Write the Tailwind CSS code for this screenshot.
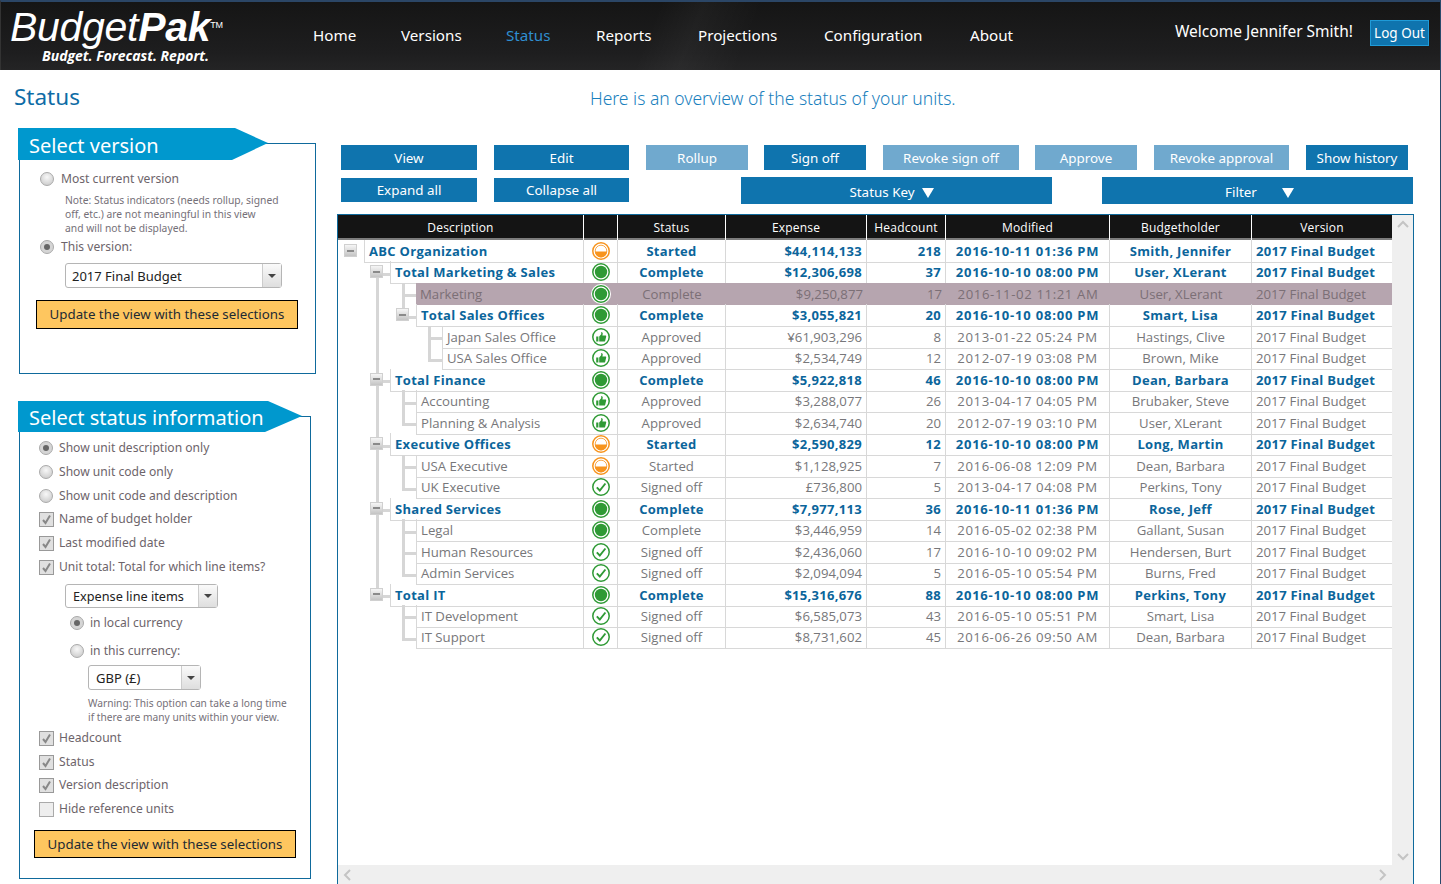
<!DOCTYPE html>
<html lang="en">
<head>
  <meta charset="UTF-8" />
  <title>BudgetPak - Status</title>
  <script src="https://cdn.jsdelivr.net/npm/@tailwindcss/browser@4"></script>
</head>
<body class="h-[884px] overflow-hidden bg-white font-['Noto_Sans',sans-serif] border-r border-[#2b4a6b]">

  <!-- Header -->
  <header class="h-[70px] flex items-center border-t-2 border-l border-t-[#2b4666] border-l-[#333] bg-[linear-gradient(112deg,transparent_45%,rgba(255,255,255,0.035)_48%,transparent_52%),linear-gradient(#151515,#1e1e1f_75%,#242425)] text-white">
    <div class="w-[312px] pl-[9px] shrink-0 -mt-[2px]">
      <div class="font-['Liberation_Sans',sans-serif] italic text-[41px] leading-[36px] tracking-[-0.3px] whitespace-nowrap">Budget<b>Pak</b><span class="text-[9px] not-italic align-[13px]">TM</span></div>
      <div class="pl-[32px] font-['Open_Sans',sans-serif] italic font-bold text-[14px] leading-[16px] mt-[3px] whitespace-nowrap">Budget. Forecast. Report.</div>
    </div>
    <nav class="flex text-[15.2px] -mt-[1px] whitespace-nowrap">
      <a class="w-[88px]">Home</a>
      <a class="w-[105px]">Versions</a>
      <a class="w-[90px] text-[#2f8ed0]">Status</a>
      <a class="w-[102px]">Reports</a>
      <a class="w-[126px]">Projections</a>
      <a class="w-[146px]">Configuration</a>
      <a class="w-[205px]">About</a>
    </nav>
    <div class="w-[195px] text-[15.5px] -mt-[8px] whitespace-nowrap">Welcome Jennifer Smith!</div>
    <button class="w-[59px] h-[26px] -mt-[6px] bg-[#0f74ae] border border-[#1f9bd8] text-[13.5px] whitespace-nowrap">Log Out</button>
  </header>

  <div class="flex h-[58px]">
    <h1 class="w-[590px] pl-[14px] pt-[11px] text-[22.5px] leading-[32px] text-[#0e6ca6]">Status</h1>
    <p class="pt-[16px] text-[17.5px] leading-[24px] font-light text-[#1a80bd] whitespace-nowrap">Here is an overview of the status of your units.</p>
  </div>

  <div class="flex">
    <!-- Left column -->
    <aside class="w-[337px] shrink-0 pl-[18px] text-[12.1px] text-[#6d646a]">

      <div class="relative z-10 w-[250px] h-[32px] -mb-[17px] pl-[11px] bg-[#0098ce] text-white text-[20px] leading-[36px] [clip-path:polygon(0_0,217px_0,250px_15px,214px_32px,0_32px)]">Select version</div>
      <section class="ml-[1px] w-[297px] h-[231px] border border-[#0f6a9c] pt-[25px]">
        <div class="flex items-center h-[20px] pl-[20px] gap-[7px]">
          <span class="w-[14px] h-[14px] rounded-full border border-[#aaa] bg-[radial-gradient(circle_at_50%_35%,#f8f8f8,#c4c4c4)]"></span>
          <span>Most current version</span>
        </div>
        <p class="pl-[45px] mt-[4px] text-[10.3px] leading-[14px] text-[#757078]">Note: Status indicators (needs rollup, signed<br>off, etc.) are not meaningful in this view<br>and will not be displayed.</p>
        <div class="flex items-center h-[20px] pl-[20px] gap-[7px] mt-[2px]">
          <span class="flex items-center justify-center w-[14px] h-[14px] rounded-full border border-[#aaa] bg-[#d5d5d5]"><span class="w-[6px] h-[6px] rounded-full bg-[#666]"></span></span>
          <span>This version:</span>
        </div>
        <div class="flex ml-[45px] mt-[6px] w-[217px] h-[25px] border border-[#b5b5b5] rounded-[3px] text-[#222] text-[13px] leading-[24px]">
          <span class="flex-1 pl-[6px]">2017 Final Budget</span>
          <span class="flex items-center justify-center w-[19px] border-l border-[#ccc] bg-[linear-gradient(#fafafa,#dedede)]"><span class="border-x-[4px] border-t-[4px] border-x-transparent border-t-[#444]"></span></span>
        </div>
        <button class="block ml-[16px] mt-[12px] pt-[1px] w-[262px] h-[29px] bg-[#fec65f] border border-black text-[#1d2a33] text-[13.3px] whitespace-nowrap">Update the view with these selections</button>
      </section>

      <div class="relative z-10 w-[284px] h-[31px] mt-[27px] -mb-[16px] pl-[11px] bg-[#0098ce] text-white text-[20px] leading-[34px] [clip-path:polygon(0_0,250px_0,284px_15px,247px_31px,0_31px)]">Select status information</div>
      <section class="ml-[1px] w-[292px] h-[463px] border border-[#0f6a9c] pt-[19px]">
        <div class="flex flex-col">
          <label class="flex items-center h-[24px] pl-[19px] gap-[6px]"><span class="flex items-center justify-center w-[14px] h-[14px] rounded-full border border-[#aaa] bg-[#d5d5d5]"><span class="w-[6px] h-[6px] rounded-full bg-[#666]"></span></span>Show unit description only</label>
          <label class="flex items-center h-[24px] pl-[19px] gap-[6px]"><span class="w-[14px] h-[14px] rounded-full border border-[#aaa] bg-[radial-gradient(circle_at_50%_35%,#f8f8f8,#c4c4c4)]"></span>Show unit code only</label>
          <label class="flex items-center h-[24px] pl-[19px] gap-[6px]"><span class="w-[14px] h-[14px] rounded-full border border-[#aaa] bg-[radial-gradient(circle_at_50%_35%,#f8f8f8,#c4c4c4)]"></span>Show unit code and description</label>
          <label class="flex items-center h-[24px] -mt-[1px] pl-[19px] gap-[5px]"><svg class="w-[15px] h-[15px]" viewBox="0 0 15 15"><rect x=".5" y=".5" width="14" height="14" fill="#e0e0e0" stroke="#999"/><path d="M4 8l2.5 3L11 3.5" fill="none" stroke="#888" stroke-width="2"/></svg>Name of budget holder</label>
          <label class="flex items-center h-[24px] pl-[19px] gap-[5px]"><svg class="w-[15px] h-[15px]" viewBox="0 0 15 15"><rect x=".5" y=".5" width="14" height="14" fill="#e0e0e0" stroke="#999"/><path d="M4 8l2.5 3L11 3.5" fill="none" stroke="#888" stroke-width="2"/></svg>Last modified date</label>
          <label class="flex items-center h-[24px] pl-[19px] gap-[5px]"><svg class="w-[15px] h-[15px]" viewBox="0 0 15 15"><rect x=".5" y=".5" width="14" height="14" fill="#e0e0e0" stroke="#999"/><path d="M4 8l2.5 3L11 3.5" fill="none" stroke="#888" stroke-width="2"/></svg>Unit total: Total for which line items?</label>
        </div>
        <div class="flex ml-[45px] mt-[5px] w-[153px] h-[24px] border border-[#b5b5b5] rounded-[3px] text-[#222] text-[12.7px] leading-[23px]">
          <span class="flex-1 pl-[7px]">Expense line items</span>
          <span class="flex items-center justify-center w-[19px] border-l border-[#ccc] bg-[linear-gradient(#fafafa,#dedede)]"><span class="border-x-[4px] border-t-[4px] border-x-transparent border-t-[#444]"></span></span>
        </div>
        <label class="flex items-center h-[24px] pl-[50px] gap-[6px] mt-[3px]"><span class="flex items-center justify-center w-[14px] h-[14px] rounded-full border border-[#aaa] bg-[#d5d5d5]"><span class="w-[6px] h-[6px] rounded-full bg-[#666]"></span></span>in local currency</label>
        <label class="flex items-center h-[24px] pl-[50px] gap-[6px] mt-[4px]"><span class="w-[14px] h-[14px] rounded-full border border-[#aaa] bg-[radial-gradient(circle_at_50%_35%,#f8f8f8,#c4c4c4)]"></span>in this currency:</label>
        <div class="flex ml-[68px] mt-[2px] w-[113px] h-[25px] border border-[#b5b5b5] rounded-[3px] text-[#222] text-[13px] leading-[24px]">
          <span class="flex-1 pl-[7px]">GBP (£)</span>
          <span class="flex items-center justify-center w-[19px] border-l border-[#ccc] bg-[linear-gradient(#fafafa,#dedede)]"><span class="border-x-[4px] border-t-[4px] border-x-transparent border-t-[#444]"></span></span>
        </div>
        <p class="pl-[68px] mt-[6px] text-[10.2px] leading-[14px] text-[#757078] whitespace-nowrap">Warning: This option can take a long time<br>if there are many units within your view.</p>
        <div class="flex flex-col mt-[2px]">
          <label class="flex items-center h-[24px] pl-[19px] gap-[5px]"><svg class="w-[15px] h-[15px]" viewBox="0 0 15 15"><rect x=".5" y=".5" width="14" height="14" fill="#e0e0e0" stroke="#999"/><path d="M4 8l2.5 3L11 3.5" fill="none" stroke="#888" stroke-width="2"/></svg>Headcount</label>
          <label class="flex items-center h-[24px] pl-[19px] gap-[5px]"><svg class="w-[15px] h-[15px]" viewBox="0 0 15 15"><rect x=".5" y=".5" width="14" height="14" fill="#e0e0e0" stroke="#999"/><path d="M4 8l2.5 3L11 3.5" fill="none" stroke="#888" stroke-width="2"/></svg>Status</label>
          <label class="flex items-center h-[24px] -mt-[1px] pl-[19px] gap-[5px]"><svg class="w-[15px] h-[15px]" viewBox="0 0 15 15"><rect x=".5" y=".5" width="14" height="14" fill="#e0e0e0" stroke="#999"/><path d="M4 8l2.5 3L11 3.5" fill="none" stroke="#888" stroke-width="2"/></svg>Version description</label>
          <label class="flex items-center h-[24px] pl-[19px] gap-[5px]"><svg class="w-[15px] h-[15px]" viewBox="0 0 15 15"><rect x=".5" y=".5" width="14" height="14" fill="#eee" stroke="#aaa"/></svg>Hide reference units</label>
        </div>
        <button class="block ml-[14px] mt-[9px] pt-[2px] w-[262px] h-[28px] bg-[#fec65f] border border-black text-[#1d2a33] text-[13.3px] whitespace-nowrap">Update the view with these selections</button>
      </section>
    </aside>

    <!-- Right column -->
    <main class="flex-1 pt-[17px] text-white text-[13.4px]">
      <div class="flex pl-[4px] h-[25px]">
        <button class="w-[136px] mr-[17px] pt-[2px] bg-[#0f74ae]">View</button>
        <button class="w-[135px] mr-[17px] pt-[2px] bg-[#0f74ae]">Edit</button>
        <button class="w-[102px] mr-[16px] pt-[2px] bg-[#70a9ce]">Rollup</button>
        <button class="w-[102px] mr-[17px] pt-[2px] bg-[#0f74ae]">Sign off</button>
        <button class="w-[136px] mr-[16px] pt-[2px] bg-[#70a9ce]">Revoke sign off</button>
        <button class="w-[102px] mr-[17px] pt-[2px] bg-[#70a9ce]">Approve</button>
        <button class="w-[135px] mr-[17px] pt-[2px] bg-[#70a9ce]">Revoke approval</button>
        <button class="w-[102px] pt-[2px] bg-[#0f74ae]">Show history</button>
      </div>
      <div class="flex items-start pl-[4px] mt-[7px] h-[37px]">
        <button class="w-[136px] h-[24px] mt-[1px] pt-[1px] mr-[17px] bg-[#0f74ae]">Expand all</button>
        <button class="w-[135px] h-[24px] mt-[1px] pt-[1px] mr-[112px] bg-[#0f74ae]">Collapse all</button>
        <button class="flex items-center justify-center gap-[7px] w-[311px] h-[27px] mr-[50px] pt-[4px] pr-[10px] bg-[#0f74ae]">Status Key <span class="border-x-[6px] border-t-[10px] border-x-transparent border-t-white"></span></button>
        <button class="flex items-center justify-center gap-[25px] w-[311px] h-[27px] pt-[4px] pl-[4px] bg-[#0f74ae]">Filter <span class="border-x-[6px] border-t-[10px] border-x-transparent border-t-white"></span></button>
      </div>

      <!-- Grid with scrollbars -->
      <div class="w-[1077px] h-[670px] border border-b-0 border-[#0f6a9c] flex flex-col font-['Open_Sans',sans-serif]">
        <div class="flex flex-1 min-h-0">
          <div class="w-[1054px]">
            <div class="grid grid-cols-[246px_34px_108px_141px_79px_164px_142px_140px] h-[25px] bg-[#141414] border-b-2 border-[#7d7d7d] text-[12px] leading-[25px] text-center tracking-[0.2px]">
              <div class="border-r border-white">Description</div>
              <div class="border-r border-white"></div>
              <div class="border-r border-white">Status</div>
              <div class="border-r border-white">Expense</div>
              <div class="border-r border-white">Headcount</div>
              <div class="border-r border-white">Modified</div>
              <div class="border-r border-white">Budgetholder</div>
              <div>Version</div>
            </div>
            <div id="rows"></div>
          </div>
          <div class="flex-1 bg-[#efefef] flex flex-col items-center justify-between pt-[5px] pb-[4px]">
            <svg class="w-[12px] h-[8px]" viewBox="0 0 12 8"><path d="M1 7l5-5 5 5" fill="none" stroke="#c4c4c4" stroke-width="2"/></svg>
            <svg class="w-[12px] h-[8px]" viewBox="0 0 12 8"><path d="M1 1l5 5 5-5" fill="none" stroke="#c4c4c4" stroke-width="2"/></svg>
          </div>
        </div>
        <div class="h-[19px] bg-[#efefef] flex items-center justify-between pl-[5px] pr-[26px]">
          <svg class="w-[8px] h-[12px]" viewBox="0 0 8 12"><path d="M7 1L2 6l5 5" fill="none" stroke="#c4c4c4" stroke-width="2"/></svg>
          <svg class="w-[8px] h-[12px]" viewBox="0 0 8 12"><path d="M1 1l5 5-5 5" fill="none" stroke="#c4c4c4" stroke-width="2"/></svg>
        </div>
      </div>
    </main>
  </div>

  <script>
    // level, name, icon, status, expense, headcount, modified, budgetholder
    const data = [
      [0, "ABC Organization", "started", "Started", "$44,114,133", "218", "2016-10-11 01:36 PM", "Smith, Jennifer", 1],
      [1, "Total Marketing & Sales", "complete", "Complete", "$12,306,698", "37", "2016-10-10 08:00 PM", "User, XLerant", 1],
      [2, "Marketing", "complete", "Complete", "$9,250,877", "17", "2016-11-02 11:21 AM", "User, XLerant", 0],
      [2, "Total Sales Offices", "complete", "Complete", "$3,055,821", "20", "2016-10-10 08:00 PM", "Smart, Lisa", 1],
      [3, "Japan Sales Office", "approved", "Approved", "¥61,903,296", "8", "2013-01-22 05:24 PM", "Hastings, Clive", 0],
      [3, "USA Sales Office", "approved", "Approved", "$2,534,749", "12", "2012-07-19 03:08 PM", "Brown, Mike", 0],
      [1, "Total Finance", "complete", "Complete", "$5,922,818", "46", "2016-10-10 08:00 PM", "Dean, Barbara", 1],
      [2, "Accounting", "approved", "Approved", "$3,288,077", "26", "2013-04-17 04:05 PM", "Brubaker, Steve", 0],
      [2, "Planning & Analysis", "approved", "Approved", "$2,634,740", "20", "2012-07-19 03:10 PM", "User, XLerant", 0],
      [1, "Executive Offices", "started", "Started", "$2,590,829", "12", "2016-10-10 08:00 PM", "Long, Martin", 1],
      [2, "USA Executive", "started", "Started", "$1,128,925", "7", "2016-06-08 12:09 PM", "Dean, Barbara", 0],
      [2, "UK Executive", "signed", "Signed off", "£736,800", "5", "2013-04-17 04:08 PM", "Perkins, Tony", 0],
      [1, "Shared Services", "complete", "Complete", "$7,977,113", "36", "2016-10-11 01:36 PM", "Rose, Jeff", 1],
      [2, "Legal", "complete", "Complete", "$3,446,959", "14", "2016-05-02 02:38 PM", "Gallant, Susan", 0],
      [2, "Human Resources", "signed", "Signed off", "$2,436,060", "17", "2016-10-10 09:02 PM", "Hendersen, Burt", 0],
      [2, "Admin Services", "signed", "Signed off", "$2,094,094", "5", "2016-05-10 05:54 PM", "Burns, Fred", 0],
      [1, "Total IT", "complete", "Complete", "$15,316,676", "88", "2016-10-10 08:00 PM", "Perkins, Tony", 1],
      [2, "IT Development", "signed", "Signed off", "$6,585,073", "43", "2016-05-10 05:51 PM", "Smart, Lisa", 0],
      [2, "IT Support", "signed", "Signed off", "$8,731,602", "45", "2016-06-26 09:50 AM", "Dean, Barbara", 0],
    ];

    const ring = (color, halo) =>
      (halo ? '<circle cx="10" cy="10" r="10" fill="#fff"/>' : '') +
      '<circle cx="10" cy="10" r="8.2" fill="#fff" stroke="' + color + '" stroke-width="1.5"/>';
    const icons = {
      complete: h => ring("#2f9a35", h) + '<circle cx="10" cy="10" r="6.2" fill="#2f9a35"/>',
      started: h => ring("#f7941e", h) + '<circle cx="10" cy="10" r="5.8" fill="#fff" stroke="#f7941e" stroke-width=".8"/><path d="M4 10.4h12a6 6 0 0 1-12 0z" fill="#f7941e"/>',
      signed: h => ring("#2f9a35", h) + '<path d="M5.8 10.3l3 3.2 5.6-7" fill="none" stroke="#2f9a35" stroke-width="1.9"/>',
      approved: h => ring("#2f9a35", h) + '<path d="M5.2 9.4h2.2v5.2H5.2zM8.2 9.4l2-2.2V4.9c1.3 0 1.8 1 1.5 2.2l-.3 1.3h3c.7 0 1 .6.8 1.2l-1 4.1c-.1.5-.5.9-1 .9H8.2z" fill="#2f9a35"/>',
    };

    const html = data.map((row, i) => {
      const [level, name, icon, status, expense, headcount, modified, holder, bold] = row;
      const hl = name === "Marketing";
      const line = hl ? "" : " border-b border-[#d8d8d8]";
      const sep = hl ? "" : " border-r border-[#d8d8d8]";
      const bg = hl ? " bg-[#b6a5af]" : "";
      const text = bold ? "font-bold text-[13px] text-[#0b659b] tracking-[0.3px]" : hl ? "text-[13.2px] text-[#7b6f76]" : "text-[13.2px] text-[#77777a]";
      const dateGap = bold ? " tracking-[0.8px]" : " tracking-[0.6px]";

      // tree connectors
      let tree = "";
      for (let l = 1; l <= level; l++) {
        const next = data.slice(i + 1).find(r => r[0] <= l);
        const more = next && next[0] === l;
        if (l < level && !more) continue;
        const half = l === level && !more;
        const first = level === 1 && i === 1;
        const cls = first || half ? "h-1/2" : "h-full";
        tree += '<span class="absolute w-[3px] bg-[#d6d6d6] ' + (first ? "top-1/2" : "top-0") + " " + cls + '" style="left:' + (12 + 26 * l) + 'px"></span>';
      }
      if (level > 0) {
        tree += '<span class="absolute top-1/2 h-[3px] bg-[#d6d6d6]" style="left:' + (12 + 26 * level) + 'px;width:14px"></span>';
      }
      const parent = data[i + 1] && data[i + 1][0] > level;
      if (parent) {
        tree += '<span class="absolute top-[4px] w-[13px] h-[13px] flex items-center justify-center border border-[#d0d0d0] bg-[linear-gradient(#f6f6f6,#c4c4c4)]" style="left:' + (6 + 26 * level) + 'px"><span class="w-[7px] h-[2px] bg-[#8a8a8a]"></span></span>';
      }

      return '<div class="grid grid-cols-[246px_34px_108px_141px_79px_164px_142px_140px] h-[21.47px] leading-[22px] whitespace-nowrap ' + text + '">' +
        '<div class="relative' + (hl ? "" : " border-r border-[#d8d8d8]") + '">' + tree +
          '<div class="h-full pl-[4px] overflow-hidden ' + (hl ? "bg-[#b6a5af]" : "border-l border-b border-[#d8d8d8]") + '" style="margin-left:' + (26 + 26 * level) + 'px">' + name.replace("&", "&amp;") + '</div></div>' +
        '<div class="flex items-center justify-center' + bg + line + sep + '"><svg class="w-[20px] h-[20px]" viewBox="0 0 20 20">' + icons[icon](hl) + '</svg></div>' +
        '<div class="text-center' + bg + line + sep + '">' + status + '</div>' +
        '<div class="text-right pr-[4px]' + bg + line + sep + '">' + expense + '</div>' +
        '<div class="text-right pr-[4px]' + bg + line + sep + '">' + headcount + '</div>' +
        '<div class="text-center' + dateGap + bg + line + sep + '">' + modified + '</div>' +
        '<div class="text-center' + bg + line + sep + '">' + holder + '</div>' +
        '<div class="pl-[4px]' + bg + line + '">2017 Final Budget</div>' +
      '</div>';
    }).join("");
    document.getElementById("rows").innerHTML = html;
  </script>
</body>
</html>
